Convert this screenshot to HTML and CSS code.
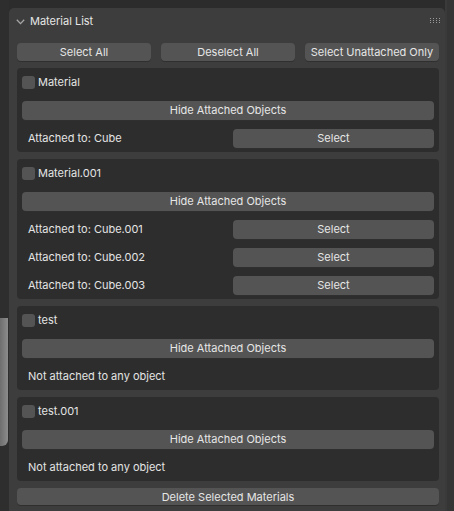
FILE: index.html
```html
<!DOCTYPE html>
<html>
<head>
<meta charset="utf-8">
<link rel="stylesheet" href="styles.css">
</head>
<body>
<div class="screen">
  <div class="side left"><div class="cube"></div></div>
  <div class="panel">
    <div class="header">
      <svg class="chev" width="9" height="6" viewBox="0 0 9 6"><path d="M0.8 0.8 L4.5 4.6 L8.2 0.8" fill="none" stroke="#a8a8a8" stroke-width="1.3"/></svg>
      <span class="title">Material List</span>
      <svg class="grip" width="10" height="5" viewBox="0 0 10 5">
        <g fill="#9a9a9a">
          <rect x="0" y="0" width="1" height="1"/><rect x="3" y="0" width="1" height="1"/><rect x="6" y="0" width="1" height="1"/><rect x="9" y="0" width="1" height="1"/>
          <rect x="0" y="2" width="1" height="1"/><rect x="3" y="2" width="1" height="1"/><rect x="6" y="2" width="1" height="1"/><rect x="9" y="2" width="1" height="1"/>
          <rect x="0" y="4" width="1" height="1"/><rect x="3" y="4" width="1" height="1"/><rect x="6" y="4" width="1" height="1"/><rect x="9" y="4" width="1" height="1"/>
        </g>
      </svg>
    </div>
    <div class="content">
      <div class="toprow">
        <div class="btn">Select All</div>
        <div class="btn">Deselect All</div>
        <div class="btn">Select Unattached Only</div>
      </div>

      <div class="box">
        <div class="row check"><span class="cb"></span><span>Material</span></div>
        <div class="row"><div class="btn wide">Hide Attached Objects</div></div>
        <div class="row split"><span class="lbl">Attached to: Cube</span><div class="btn sel">Select</div></div>
      </div>

      <div class="box">
        <div class="row check"><span class="cb"></span><span>Material.001</span></div>
        <div class="row"><div class="btn wide">Hide Attached Objects</div></div>
        <div class="row split"><span class="lbl">Attached to: Cube.001</span><div class="btn sel">Select</div></div>
        <div class="row split"><span class="lbl">Attached to: Cube.002</span><div class="btn sel">Select</div></div>
        <div class="row split"><span class="lbl">Attached to: Cube.003</span><div class="btn sel">Select</div></div>
      </div>

      <div class="box">
        <div class="row check"><span class="cb"></span><span>test</span></div>
        <div class="row"><div class="btn wide">Hide Attached Objects</div></div>
        <div class="row split"><span class="lbl">Not attached to any object</span></div>
      </div>

      <div class="box">
        <div class="row check"><span class="cb"></span><span>test.001</span></div>
        <div class="row"><div class="btn wide">Hide Attached Objects</div></div>
        <div class="row split"><span class="lbl">Not attached to any object</span></div>
      </div>

      <div class="btn delete">Delete Selected Materials</div>
    </div>
  </div>
  <div class="side right"></div>
</div>
</body>
</html>
```

FILE: styles.css
```css
* { box-sizing: border-box; }
html, body {
  margin: 0;
  padding: 0;
  background: #2c2c2c;
  width: 454px;
  height: 511px;
  overflow: hidden;
}
body {
  font-family: Inter, "DejaVu Sans", sans-serif;
  font-size: 11px;
  color: #e4e4e4;
}
.screen {
  display: flex;
  width: 454px;
  height: 511px;
}
.side {
  flex: 0 0 9px;
  height: 511px;
}
.side.left {
  background: #2e2e2e;
  padding-top: 318px;
}
.cube {
  width: 8px;
  height: 128px;
  background: linear-gradient(90deg, #6e6e6e, #8c8c8c);
  border-bottom-right-radius: 6px;
}
.side.right {
  background: #353535;
  border-left: 2px solid #3a3a3a;
}
.panel {
  flex: 0 0 436px;
  margin-top: 8px;
  background: #3d3d3d;
  border-radius: 5px 5px 0 0;
  display: flex;
  flex-direction: column;
}
.header {
  height: 26px;
  display: flex;
  align-items: center;
  padding-left: 7px;
  padding-right: 5px;
}
.chev { margin-right: 5px; margin-top: 1px; }
.title { flex: 1; color: #e6e6e6; }
.grip { margin-top: -2px; }
.content {
  padding: 9px 6px 0 8px;
  display: flex;
  flex-direction: column;
}
.toprow {
  display: grid;
  grid-template-columns: 1fr 1fr 1fr;
  column-gap: 10px;
  margin-bottom: 7px;
}
.btn {
  height: 18px;
  background: #545454;
  border-radius: 4px;
  box-shadow: 0 1px 0 #2f2f2f;
  display: flex;
  align-items: center;
  justify-content: center;
  color: #e6e6e6;
  white-space: nowrap;
}
.box {
  background: #2d2d2d;
  border-radius: 4px;
  padding: 4px 5px;
  display: flex;
  flex-direction: column;
  gap: 8px;
  margin-bottom: 7px;
}
.row {
  height: 20px;
  display: flex;
  align-items: center;
}
.row .btn { height: 19px; }
.wide { flex: 1; }
.cb {
  width: 13px;
  height: 13px;
  background: #545454;
  border-radius: 3px;
  margin-left: 0;
  margin-right: 3px;
}
.split .lbl {
  flex: 1;
  padding-left: 6px;
}
.sel { flex: 0 0 201px; }
.delete { height: 17px; }
```
